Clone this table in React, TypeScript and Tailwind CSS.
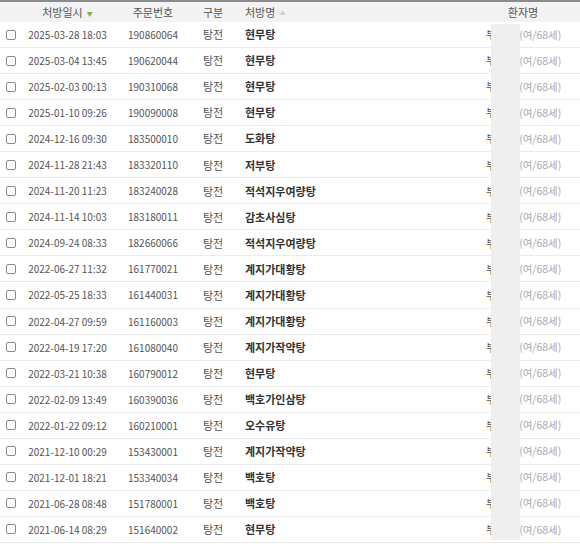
import React from "react";

const ROWS: [string, string, string][] = [
  ["2025-03-28 18:03", "190860064", "현무탕"],
  ["2025-03-04 13:45", "190620044", "현무탕"],
  ["2025-02-03 00:13", "190310068", "현무탕"],
  ["2025-01-10 09:26", "190090008", "현무탕"],
  ["2024-12-16 09:30", "183500010", "도화탕"],
  ["2024-11-28 21:43", "183320110", "저부탕"],
  ["2024-11-20 11:23", "183240028", "적석지우여량탕"],
  ["2024-11-14 10:03", "183180011", "감초사심탕"],
  ["2024-09-24 08:33", "182660066", "적석지우여량탕"],
  ["2022-06-27 11:32", "161770021", "계지가대황탕"],
  ["2022-05-25 18:33", "161440031", "계지가대황탕"],
  ["2022-04-27 09:59", "161160003", "계지가대황탕"],
  ["2022-04-19 17:20", "161080040", "계지가작약탕"],
  ["2022-03-21 10:38", "160790012", "현무탕"],
  ["2022-02-09 13:49", "160390036", "백호가인삼탕"],
  ["2022-01-22 09:12", "160210001", "오수유탕"],
  ["2021-12-10 00:29", "153430001", "계지가작약탕"],
  ["2021-12-01 18:21", "153340034", "백호탕"],
  ["2021-06-28 08:48", "151780001", "백호탕"],
  ["2021-06-14 08:29", "151640002", "현무탕"],
];

export default function App() {
  return (
    <div
      className="relative w-[580px] h-[547px] bg-white overflow-hidden text-[11px] text-[#444]"
      style={{ fontFamily: '"Noto Sans CJK KR", "Noto Sans", sans-serif' }}
    >
      {/* Header */}
      <div className="flex items-center h-[22px] border-t-2 border-[#8c8c8c] bg-[#f3f3f3] text-[#555]">
        <div className="w-[22px]" />
        <div className="w-[91px] flex items-center justify-center gap-[4px]">
          <span>처방일시</span>
          <span className="text-[6px] text-[#7cb342] pt-[2px]">▼</span>
        </div>
        <div className="w-[80px] text-center">주문번호</div>
        <div className="w-[40px] text-center">구분</div>
        <div className="w-[233px] pl-[12px] flex items-center gap-[4px]">
          <span>처방명</span>
          <span className="text-[6px] text-[#d0d0d0]">▲</span>
        </div>
        <div className="flex-1 text-center">환자명</div>
      </div>

      {/* Rows */}
      {ROWS.map(([date, no, name], idx) => (
        <div key={idx} className="flex items-center h-[26.05px] border-b border-[#ececec]">
          <div className="w-[22px] flex justify-center">
            <span className="block w-[10px] h-[10px] border border-[#8a8a8a] rounded-[2px] bg-white" />
          </div>
          <div className="w-[91px] text-center text-[10px] text-[#555]">{date}</div>
          <div className="w-[80px] text-center text-[10px] text-[#555]">{no}</div>
          <div className="w-[40px] text-center text-[#555]">탕전</div>
          <div className="w-[233px] pl-[12px] font-bold text-[#333]">{name}</div>
          <div className="flex-1 flex items-center pl-[20px]">
            <span className="text-[#555]">부</span>
            <span className="w-[23px]" />
            <span className="text-[#aaa] text-[10.5px]">(여/68세)</span>
          </div>
        </div>
      ))}

      {/* name masking */}
      <div className="absolute left-[491px] top-[24px] w-[29px] h-[516px] bg-[#efefef]" />
    </div>
  );
}
